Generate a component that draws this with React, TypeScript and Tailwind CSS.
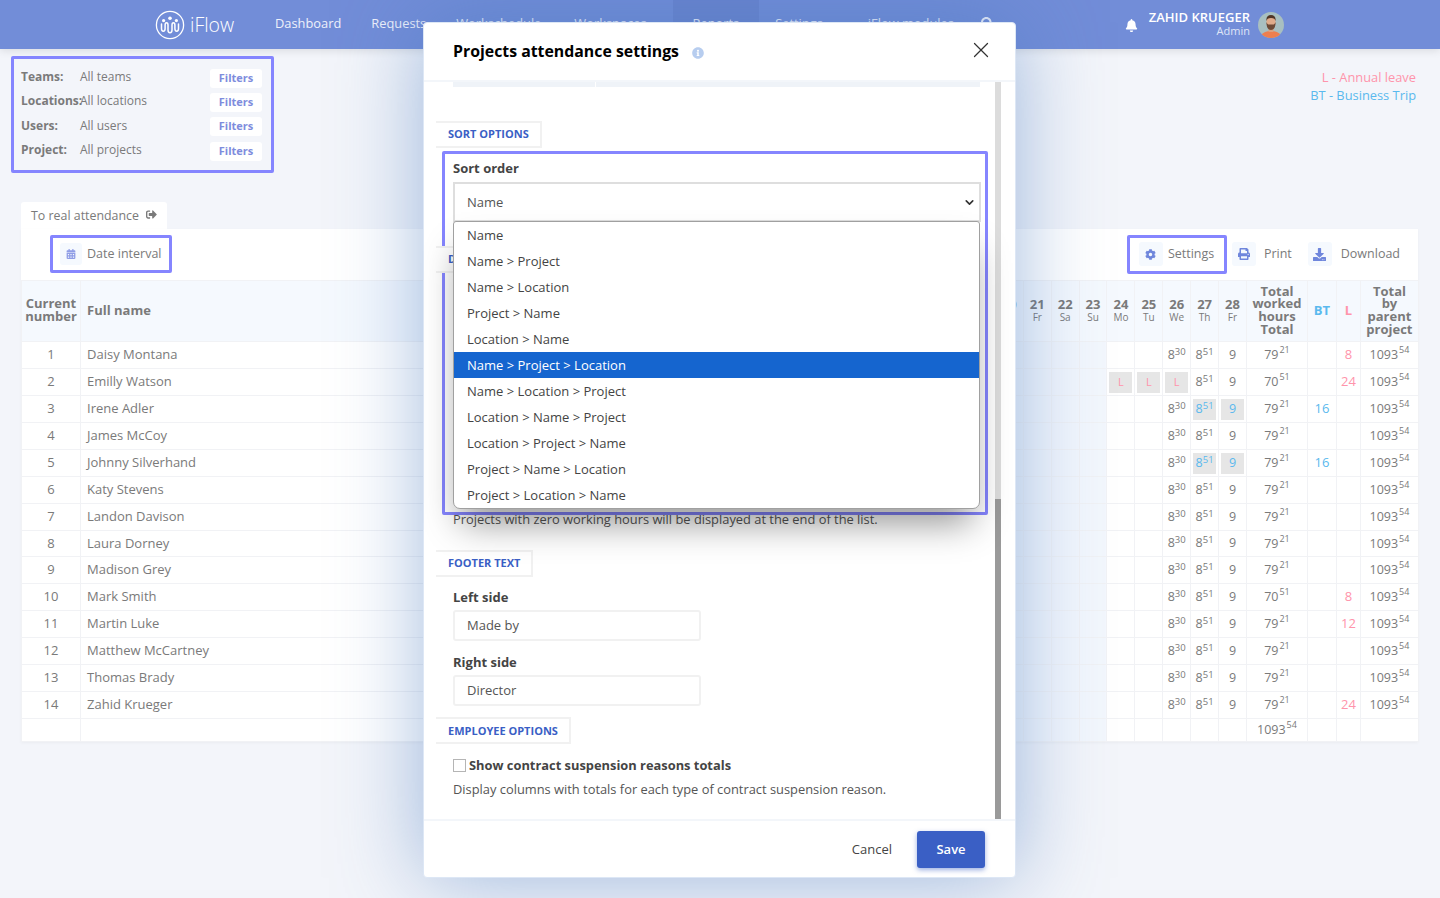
import { ChevronDown, X } from 'lucide-react';
import { FaBell, FaCalendarAlt, FaCog, FaDownload, FaInfoCircle, FaPrint, FaSearch, FaSignOutAlt } from 'react-icons/fa';

const navItems = [
  { label: 'Dashboard', className: 'pr-[30px]' },
  { label: 'Requests', className: 'pr-[30px]' },
  { label: 'Workschedule', className: 'pr-[33px]' },
  { label: 'Workspaces', className: 'pr-[26px]' },
  { label: 'Reports', className: 'bg-[#6a84cf] px-[20px] mr-[16px]' },
  { label: 'Settings', className: 'pr-[45px]' },
  { label: 'iFlow modules', className: 'pr-[27px]' },
];

const filters = [
  { label: 'Teams:', value: 'All teams' },
  { label: 'Locations:', value: 'All locations' },
  { label: 'Users:', value: 'All users' },
  { label: 'Project:', value: 'All projects' },
];

const weekdays = ['Sa', 'Su', 'Mo', 'Tu', 'We', 'Th', 'Fr'];
const days = Array.from({ length: 28 }, (_, i) => ({ num: i + 1, name: weekdays[i % 7] }));

interface Row {
  name: string;
  total?: string;
  leave?: number;
  trip?: boolean;
  onLeave?: boolean;
}

const rows: Row[] = [
  { name: 'Daisy Montana', leave: 8 },
  { name: 'Emilly Watson', total: '51', leave: 24, onLeave: true },
  { name: 'Irene Adler', trip: true },
  { name: 'James McCoy' },
  { name: 'Johnny Silverhand', trip: true },
  { name: 'Katy Stevens' },
  { name: 'Landon Davison' },
  { name: 'Laura Dorney' },
  { name: 'Madison Grey' },
  { name: 'Mark Smith', total: '51', leave: 8 },
  { name: 'Martin Luke', leave: 12 },
  { name: 'Matthew McCartney' },
  { name: 'Thomas Brady' },
  { name: 'Zahid Krueger', leave: 24 },
];

const sortOptions = [
  'Name',
  'Name > Project',
  'Name > Location',
  'Project > Name',
  'Location > Name',
  'Name > Project > Location',
  'Name > Location > Project',
  'Location > Name > Project',
  'Location > Project > Name',
  'Project > Name > Location',
  'Project > Location > Name',
];

function Logo() {
  return (
    <svg width="30" height="30" viewBox="0 0 30 30" fill="none" stroke="white">
      <circle cx="15" cy="15" r="13.6" strokeWidth="1.3" />
      <circle cx="15" cy="8.3" r="1.8" fill="white" stroke="none" />
      <circle cx="8.6" cy="10.6" r="1.6" fill="white" stroke="none" />
      <circle cx="21.4" cy="10.6" r="1.6" fill="white" stroke="none" />
      <path
        d="M6.5 14v4.500c0 3.500 3.600 3.500 3.600 0V15c0-3 2.900-3 2.900 0v5c0 3.500 4 3.500 4 0v-5c0-3 2.900-3 2.900 0v3.500c0 3.500 3.600 3.500 3.600 0V14"
        strokeWidth="1.5"
        strokeLinecap="round"
      />
    </svg>
  );
}

function Avatar() {
  return (
    <svg width="26" height="26" viewBox="0 0 26 26" className="rounded-full">
      <rect width="26" height="26" fill="#a8bfc0" />
      <path d="M3 26c0-5 4-7 10-7s10 2 10 7z" fill="#ee7f4f" />
      <rect x="10.500" y="14" width="5" height="6" fill="#dca17f" />
      <ellipse cx="13" cy="10" rx="4.600" ry="6" fill="#e0ab8a" />
      <path d="M8.400 10c0 5 1.600 8 4.600 8s4.600-3 4.600-8c-.8 2-1.600 2.600-2.600 2.600h-4c-1 0-1.800-.6-2.600-2.600z" fill="#6d4a36" />
      <path d="M8.400 9c-.4-4 1.600-6 4.600-6s5 2 4.600 6c-.6-2-1.600-3-4.600-3s-4 1-4.600 3z" fill="#4f3526" />
    </svg>
  );
}

function Time({ h = '8', m, big }: { h?: string; m: string; big?: boolean }) {
  return (
    <span className="whitespace-nowrap">
      {h}
      <span className={big ? 'ml-[1px] align-[6px] text-[9px] leading-none' : 'align-[4px] text-[9.500px] leading-none'}>{m}</span>
    </span>
  );
}

function Chip({ children, tone }: { children: React.ReactNode; tone: 'pink' | 'blue' }) {
  return (
    <div className={`mx-[2px] flex h-[21px] items-center justify-center bg-[#e6e6e6] ${tone === 'pink' ? 'text-[#ff94ab] text-[11px]' : 'text-[#5ab9ee]'}`}>
      {children}
    </div>
  );
}

function IconTile({ children }: { children: React.ReactNode }) {
  return <span className="flex h-[24px] w-[24px] items-center justify-center rounded-[3px] bg-[#f5f9fe] text-[#6f86dc]">{children}</span>;
}

function SectionTab({ children }: { children: React.ReactNode }) {
  return (
    <div className="inline-flex h-[27px] items-center whitespace-nowrap border-y-2 border-r-2 border-[#f1f1f1] bg-white pl-[12px] pr-[11px] text-[11px] font-bold text-[#3a5fc5]">
      {children}
    </div>
  );
}

function TextField({ label, value }: { label: string; value: string }) {
  return (
    <div className="pl-[29px]">
      <div className="mb-[4px] text-[13px] font-bold leading-[18px] text-[#444]">{label}</div>
      <div className="flex h-[31px] w-[248px] items-center rounded-[3px] border-2 border-[#f1f1f1] pl-[12px] pt-[2px] text-[13px] text-[#555]">{value}</div>
    </div>
  );
}

function AttendanceTable() {
  const cell = 'border border-[#f1f2f5] p-0 text-center';
  return (
    <table className="w-[1397px] table-fixed border-collapse text-[12.500px] text-[#7a7a7a]">
      <colgroup>
        <col className="w-[59px]" />
        <col className="w-[385px]" />
        {days.map((d) => (
          <col key={d.num} className="w-[27.900px]" />
        ))}
        <col className="w-[61px]" />
        <col className="w-[29px]" />
        <col className="w-[24px]" />
        <col className="w-[58px]" />
      </colgroup>
      <thead>
        <tr className="h-[61px] bg-[#f5f9fe] text-[13px] font-bold leading-[12.700px]">
          <th className={`${cell} pb-[2px]`}>
            Current
            <br />
            number
          </th>
          <th className={`${cell} pb-[2px] pl-[6px] text-left`}>Full name</th>
          {days.map((d) => (
            <th key={d.num} className={`${cell} pb-[2px]`}>
              <div className="leading-[14px]">{d.num}</div>
              <div className="text-[10px] font-normal leading-[12px]">{d.name}</div>
            </th>
          ))}
          <th className={`${cell} pb-[2px]`}>
            Total
            <br />
            worked
            <br />
            hours
            <br />
            Total
          </th>
          <th className={`${cell} pb-[2px] text-[#5ab9ee]`}>BT</th>
          <th className={`${cell} pb-[2px] text-[#ff94ab]`}>L</th>
          <th className={`${cell} pb-[2px]`}>
            Total
            <br />
            by
            <br />
            parent
            <br />
            project
          </th>
        </tr>
      </thead>
      <tbody>
        {rows.map((r, i) => (
          <tr key={r.name} className={i === 7 ? 'h-[26px]' : 'h-[27px]'}>
            <td className={`${cell} text-[13px]`}>{i + 1}</td>
            <td className={`${cell} pl-[6px] text-left text-[13px]`}>{r.name}</td>
            {days.map((d) => {
              if (d.num === 24 || d.num === 25) {
                return <td key={d.num} className={cell}>{r.onLeave && <Chip tone="pink">L</Chip>}</td>;
              }
              if (d.num === 26) {
                return (
                  <td key={d.num} className={cell}>
                    {r.onLeave ? <Chip tone="pink">L</Chip> : <Time m="30" />}
                  </td>
                );
              }
              if (d.num === 27) {
                return (
                  <td key={d.num} className={cell}>
                    {r.trip ? <Chip tone="blue"><Time m="51" /></Chip> : <Time m="51" />}
                  </td>
                );
              }
              if (d.num === 28) {
                return <td key={d.num} className={cell}>{r.trip ? <Chip tone="blue">9</Chip> : '9'}</td>;
              }
              return <td key={d.num} className={`${cell} bg-[#f3f7fd]`} />;
            })}
            <td className={cell}>
              <Time h={r.total ? '70' : '79'} m={r.total ?? '21'} big />
            </td>
            <td className={`${cell} text-[13px] text-[#5ab9ee]`}>{r.trip ? '16' : ''}</td>
            <td className={`${cell} text-[13px] text-[#ff94ab]`}>{r.leave ?? ''}</td>
            <td className={cell}>
              <Time h="1093" m="54" big />
            </td>
          </tr>
        ))}
        <tr className="h-[23px]">
          <td className={cell} />
          <td className={cell} />
          {days.map((d) => (
            <td key={d.num} className={`${cell} ${d.num <= 23 ? 'bg-[#f3f7fd]' : ''}`} />
          ))}
          <td className={cell}>
            <Time h="1093" m="54" big />
          </td>
          <td className={cell} />
          <td className={cell} />
          <td className={cell} />
        </tr>
      </tbody>
    </table>
  );
}

function SettingsModal() {
  return (
    <div className="absolute left-[423px] top-[22px] z-10 flex h-[856px] w-[593px] flex-col rounded-[4px] border border-[#dde7f5] bg-white shadow-[0_0_85px_rgba(70,120,190,0.5)]">
      <div className="flex h-[59px] shrink-0 items-center justify-between border-b-2 border-[#f3f6fa] pl-[29px] pr-[20px]">
        <div className="flex items-center pt-[1px]">
          <span className="text-[15.850px] font-bold text-black">Projects attendance settings</span>
          <FaInfoCircle className="ml-[13px] mt-[2px] text-[#b7cdef]" size={12} />
        </div>
        <X size={26} strokeWidth={1.15} className="mb-[3px] mr-[1px] text-[#333]" />
      </div>

      <div className="relative min-h-0 flex-1">
        {/* scrollbar */}
        <div className="absolute bottom-0 right-[14px] top-0 flex w-[6px] flex-col bg-[#dcdcdc]">
          <div className="mt-auto h-[320px] bg-[#9a9a9a]" />
        </div>

        <div className="ml-[29px] mr-[35px] flex h-[5px] gap-[1px]">
          <div className="w-[142px] bg-[#eff3f8]" />
          <div className="flex-1 bg-[#eff3f8]" />
        </div>

        <div className="ml-[12px] mt-[33px]">
          <SectionTab>SORT OPTIONS</SectionTab>
        </div>

        {/* sort order, browser select opened over the next section */}
        <div className="relative z-10 ml-[18px] mt-[3px] h-[364px] w-[546px] rounded-[2px] border-[3px] border-[#8585ff]">
          <div className="ml-[8px] mt-[5px] text-[13px] font-bold leading-[18px] text-[#444]">Sort order</div>
          <div className="ml-[8px] mt-[5px] flex h-[40px] w-[528px] items-center justify-between border-2 border-[#dedede] pl-[12px] pr-[3px] pt-[1px] text-[13px] text-[#555]">
            Name
            <ChevronDown size={13} strokeWidth={3} className="text-[#333]" />
          </div>
          <div className="-ml-[9px] mt-[23px]">
            <SectionTab>DISPLAY OPTIONS</SectionTab>
          </div>
          <div className="absolute left-[8px] top-[67px] w-[527px] overflow-hidden rounded-b-[7px] rounded-t-[3px] border border-[#a0a0a0] bg-white text-[13px] leading-[26px] text-[#444] shadow-[0_22px_34px_-8px_rgba(0,0,0,0.42)]">
            {sortOptions.map((o, i) => (
              <div key={o} className={`h-[26px] pl-[13px] ${i === 5 ? 'bg-[#1565cf] text-white' : ''}`}>
                {o}
              </div>
            ))}
          </div>
        </div>

        <p className="ml-[29px] mt-[-5px] text-[12.870px] leading-[18px] text-[#555]">Projects with zero working hours will be displayed at the end of the list.</p>

        <div className="ml-[12px] mt-[21px]">
          <SectionTab>FOOTER TEXT</SectionTab>
        </div>
        <div className="mt-[11px] flex flex-col gap-[12px]">
          <TextField label="Left side" value="Made by" />
          <TextField label="Right side" value="Director" />
        </div>
        <div className="ml-[12px] mt-[11px]">
          <SectionTab>EMPLOYEE OPTIONS</SectionTab>
        </div>
        <div className="ml-[29px] mt-[12px] flex items-center gap-[3px] text-[12.870px] font-bold leading-[18px] text-[#444]">
          <span className="h-[13px] w-[13px] border border-[#b5b5b5] bg-white" />
          Show contract suspension reasons totals
        </div>
        <p className="ml-[29px] mt-[6px] text-[12.870px] leading-[18px] text-[#555]">Display columns with totals for each type of contract suspension reason.</p>
      </div>

      <div className="flex h-[58px] shrink-0 items-center justify-end gap-[25px] border-t-2 border-[#f3f6fa] pr-[30px]">
        <span className="pt-[1px] text-[13px] text-[#444]">Cancel</span>
        <button className="h-[37px] w-[68px] rounded-[3px] bg-[#3a5fc5] pt-[1px] text-[13px] font-semibold text-white shadow-[0_2px_5px_rgba(58,95,197,0.5)]">Save</button>
      </div>
    </div>
  );
}

export default function App() {
  return (
    <div className="relative h-[898px] w-[1440px] overflow-hidden bg-[#f3f5fa] font-['Open_Sans',sans-serif] text-[#7a7a7a]">
      <header className="flex h-[49px] items-center bg-[#728dd8] text-white shadow-[0_2px_8px_rgba(0,0,0,0.1)]">
        <div className="ml-[155px] flex w-[120px] items-center gap-[5px]">
          <Logo />
          <span className="text-[19.500px] font-light">iFlow</span>
        </div>
        <nav className="flex h-full items-center text-[12.850px] text-[#eef1fb]">
          {navItems.map((n) => (
            <span key={n.label} className={`flex h-full items-center whitespace-nowrap pb-[2px] ${n.className}`}>
              {n.label}
            </span>
          ))}
          <FaSearch size={13} className="mb-[2px]" />
        </nav>
        <div className="ml-auto mr-[156px] flex items-center">
          <FaBell size={13} className="mt-[1px]" />
          <div className="ml-[11px] pb-[2px] text-right">
            <div className="text-[13px] font-semibold leading-[13px]">ZAHID KRUEGER</div>
            <div className="text-[11px] leading-[13px] text-[#dfe5f7]">Admin</div>
          </div>
          <div className="ml-[8px]">
            <Avatar />
          </div>
        </div>
      </header>

      <div className="flex items-start justify-between pl-[11px] pr-[24px] pt-[7px]">
        <div className="w-[263px] rounded-[2px] border-[3px] border-[#8585ff] pb-[7px] pl-[7px] pr-[9px] pt-[7px]">
          {filters.map((f) => (
            <div key={f.label} className="flex h-[24.300px] items-center text-[12px]">
              <span className="w-[59px] shrink-0 pb-[2px] font-bold">{f.label}</span>
              <span className="pb-[2px]">{f.value}</span>
              <button className="ml-auto h-[19px] w-[52px] rounded-[3px] bg-white text-[11px] font-bold text-[#7e8cdd]">Filters</button>
            </div>
          ))}
        </div>
        <div className="pt-[12px] text-right text-[12.850px] leading-[18px]">
          <div className="text-[#ff94ab]">L - Annual leave</div>
          <div className="text-[#5ab9ee]">BT - Business Trip</div>
        </div>
      </div>

      <div className="ml-[21px] mt-[29px] flex h-[27px] w-[146px] items-center gap-[7px] rounded-t-[3px] bg-white pl-[10px] pt-[1px] text-[12.400px]">
        To real attendance
        <FaSignOutAlt size={11} className="mb-[3px]" />
      </div>

      <div className="ml-[21px] w-[1397px] bg-white shadow-[0_1px_3px_rgba(0,0,0,0.04)]">
        <div className="flex h-[51px] items-center justify-between pb-[1px] pl-[29px] pr-[18px] text-[12.500px]">
          <div className="flex h-[38px] w-[122px] items-center gap-[5px] rounded-[2px] border-[3px] border-[#8585ff] pl-[7px]">
            <span className="flex h-[22px] w-[22px] items-center justify-center rounded-[3px] bg-[#f5f9fe] text-[#8f9de6]">
              <FaCalendarAlt size={10} />
            </span>
            <span className="pt-[1px]">Date interval</span>
          </div>
          <div className="flex items-center">
            <div className="flex h-[39px] w-[100px] items-center gap-[5px] rounded-[2px] border-[3px] border-[#8585ff] pl-[9px]">
              <IconTile>
                <FaCog size={11} />
              </IconTile>
              Settings
            </div>
            <div className="ml-[5px] flex items-center gap-[8px]">
              <IconTile>
                <FaPrint size={12} />
              </IconTile>
              Print
            </div>
            <div className="ml-[16px] flex items-center gap-[9px]">
              <IconTile>
                <FaDownload size={13} />
              </IconTile>
              Download
            </div>
          </div>
        </div>
        <AttendanceTable />
      </div>

      <SettingsModal />
    </div>
  );
}
